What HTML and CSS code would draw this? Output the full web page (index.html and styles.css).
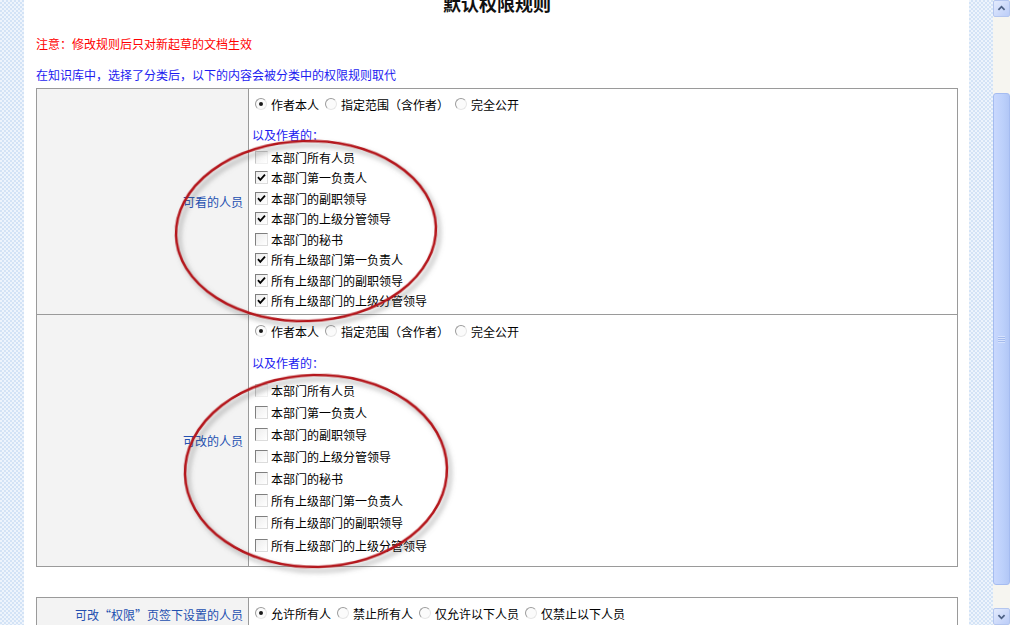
FILE: index.html
```html
<!DOCTYPE html>
<html lang="zh-CN">
<head>
<meta charset="utf-8">
<title>默认权限规则</title>
<link rel="stylesheet" href="styles.css">
</head>
<body>
<div class="page">
  <div class="strip"></div>
  <main class="main">
    <h1 class="title">默认权限规则</h1>
    <p class="notice">注意：修改规则后只对新起草的文档生效</p>
    <p class="info">在知识库中，选择了分类后，以下的内容会被分类中的权限规则取代</p>

    <div class="rules">
      <div class="row row-view">
        <div class="label">可看的人员</div>
        <div class="field">
          <div class="radios">
            <span class="opt"><i class="radio on"></i>作者本人</span>
            <span class="opt"><i class="radio"></i>指定范围（含作者）</span>
            <span class="opt"><i class="radio"></i>完全公开</span>
          </div>
          <div class="sub">以及作者的：</div>
          <ul class="checks">
            <li><i class="cb faint"></i>本部门所有人员</li>
            <li><i class="cb on"><svg viewBox="0 0 11 11"><path d="M2 5.2 L4.3 7.8 L9 2.6"/></svg></i>本部门第一负责人</li>
            <li><i class="cb on"><svg viewBox="0 0 11 11"><path d="M2 5.2 L4.3 7.8 L9 2.6"/></svg></i>本部门的副职领导</li>
            <li><i class="cb on"><svg viewBox="0 0 11 11"><path d="M2 5.2 L4.3 7.8 L9 2.6"/></svg></i>本部门的上级分管领导</li>
            <li><i class="cb"></i>本部门的秘书</li>
            <li><i class="cb on"><svg viewBox="0 0 11 11"><path d="M2 5.2 L4.3 7.8 L9 2.6"/></svg></i>所有上级部门第一负责人</li>
            <li><i class="cb on"><svg viewBox="0 0 11 11"><path d="M2 5.2 L4.3 7.8 L9 2.6"/></svg></i>所有上级部门的副职领导</li>
            <li><i class="cb on"><svg viewBox="0 0 11 11"><path d="M2 5.2 L4.3 7.8 L9 2.6"/></svg></i>所有上级部门的上级分管领导</li>
          </ul>
        </div>
      </div>
      <div class="row row-edit">
        <div class="label">可改的人员</div>
        <div class="field">
          <div class="radios">
            <span class="opt"><i class="radio on"></i>作者本人</span>
            <span class="opt"><i class="radio"></i>指定范围（含作者）</span>
            <span class="opt"><i class="radio"></i>完全公开</span>
          </div>
          <div class="sub">以及作者的：</div>
          <ul class="checks">
            <li><i class="cb faint"></i>本部门所有人员</li>
            <li><i class="cb"></i>本部门第一负责人</li>
            <li><i class="cb"></i>本部门的副职领导</li>
            <li><i class="cb"></i>本部门的上级分管领导</li>
            <li><i class="cb"></i>本部门的秘书</li>
            <li><i class="cb"></i>所有上级部门第一负责人</li>
            <li><i class="cb"></i>所有上级部门的副职领导</li>
            <li><i class="cb"></i>所有上级部门的上级分管领导</li>
          </ul>
        </div>
      </div>
    </div>

    <div class="rules rules-tab">
      <div class="row row-tab">
        <div class="label">可改“权限”页签下设置的人员</div>
        <div class="field">
          <div class="radios">
            <span class="opt"><i class="radio on"></i>允许所有人</span>
            <span class="opt"><i class="radio"></i>禁止所有人</span>
            <span class="opt"><i class="radio"></i>仅允许以下人员</span>
            <span class="opt"><i class="radio"></i>仅禁止以下人员</span>
          </div>
        </div>
      </div>
    </div>
  </main>
  <div class="strip"></div>
  <div class="scrollbar">
    <div class="sb-btn"><svg viewBox="0 0 17 17"><path d="M5 10 L8.5 6.5 L12 10"/></svg></div>
    <div class="sb-track">
      <div class="sb-thumb"><span class="grip"></span></div>
    </div>
    <div class="sb-btn"><svg viewBox="0 0 17 17"><path d="M5 7 L8.5 10.5 L12 7"/></svg></div>
  </div>
</div>

<svg class="marks" viewBox="0 0 1010 625" width="1010" height="625">
  <defs>
    <filter id="sh" x="-20%" y="-20%" width="140%" height="140%">
      <feDropShadow dx="3" dy="4" stdDeviation="2.5" flood-color="#606060" flood-opacity="0.55"/>
    </filter>
  </defs>
  <ellipse cx="306" cy="231" rx="130" ry="90" transform="rotate(-2 306 231)" filter="url(#sh)"/>
  <ellipse cx="316" cy="471" rx="131" ry="96" transform="rotate(-1.5 316 471)" filter="url(#sh)"/>
</svg>
</body>
</html>
```

FILE: styles.css
```css
html, body {
  margin: 0;
  padding: 0;
  width: 1010px;
  height: 625px;
  overflow: hidden;
  background: #fff;
}

body {
  font-family: "Noto Sans CJK SC", "Liberation Sans", sans-serif;
  font-size: 12px;
  color: #000;
  position: relative;
}

.page {
  display: flex;
  height: 625px;
}

.strip {
  width: 24px;
  flex: none;
  background-color: #e9f1fb;
  background-image: repeating-conic-gradient(#d3e3f6 0 25%, #eef4fc 0 50%);
  background-size: 4px 4px;
}

.main {
  width: 945px;
  flex: none;
  box-sizing: border-box;
  padding: 0 11px 0 12px;
  background: #fff;
}

.title {
  margin: -7px 0 0;
  height: 20px;
  line-height: 20px;
  font-size: 18px;
  font-weight: bold;
  text-align: center;
  color: #111;
}

.notice {
  margin: 23px 0 0;
  line-height: 16px;
  color: #ff0000;
}

.info {
  margin: 15px 0 0;
  line-height: 16px;
  color: #1c1cf0;
}

.rules {
  margin-top: 5px;
  width: 922px;
  box-sizing: border-box;
  border: 1px solid #9a9a9a;
}

.rules-tab {
  margin-top: 30px;
}

.row {
  display: grid;
  grid-template-columns: 211px 1fr;
}

.row-view {
  height: 225px;
}

.row-edit {
  height: 251px;
  border-top: 1px solid #9a9a9a;
}

.row-tab {
  height: 32px;
}

.label {
  background: #f3f3f3;
  border-right: 1px solid #9a9a9a;
  display: flex;
  align-items: center;
  justify-content: flex-end;
  padding-right: 5px;
  color: #2350b0;
  margin-right: -1px;
}

.field {
  padding-left: 4px;
  display: flex;
  flex-direction: column;
}

.radios {
  display: flex;
  align-items: center;
  height: 20px;
  margin-top: 5px;
}

.row-edit .radios { margin-top: 6px; }

.opt {
  display: flex;
  align-items: center;
  white-space: nowrap;
}

.opt + .opt {
  margin-left: 3px;
}

.radio {
  display: inline-block;
  box-sizing: border-box;
  width: 12px;
  height: 12px;
  margin: 0 4px 0 3px;
  border-radius: 50%;
  border: 1px solid;
  border-color: #9c9c9c #e6e6e6 #e6e6e6 #9c9c9c;
  background: #fbfbfb;
  position: relative;
}

.radio.on::after {
  content: "";
  position: absolute;
  left: 3px;
  top: 3px;
  width: 4px;
  height: 4px;
  border-radius: 50%;
  background: #1a1a1a;
}

.sub {
  margin-top: 11px;
  line-height: 20px;
  height: 20px;
  color: #1c1cf0;
}

.row-edit .sub { margin-top: 12px; }

.checks {
  list-style: none;
  margin: 2px 0 0;
  padding: 0;
}

.row-edit .checks { margin-top: 6px; }

.checks li {
  display: flex;
  align-items: center;
  height: 20.5px;
  white-space: nowrap;
}

.row-edit .checks li {
  height: 22.15px;
}

.cb {
  display: inline-block;
  box-sizing: border-box;
  width: 13px;
  height: 13px;
  margin: 0 3px 0 3px;
  border: 1px solid;
  border-color: #7f7f7f #dcdcdc #dcdcdc #7f7f7f;
  background: linear-gradient(135deg, #ececec, #ffffff);
  position: relative;
}

.cb.faint {
  border-color: #c4c4c4 #f0f0f0 #f0f0f0 #c4c4c4;
}

.cb svg {
  position: absolute;
  left: 0;
  top: 0;
  width: 11px;
  height: 11px;
}

.cb svg path {
  fill: none;
  stroke: #000;
  stroke-width: 1.8;
}

.row-tab .radios {
  margin-top: 5px;
}

.scrollbar {
  width: 17px;
  flex: none;
  display: flex;
  flex-direction: column;
  background: #f6f5f0;
}

.sb-btn {
  height: 17px;
  flex: none;
  box-sizing: border-box;
  border: 1px solid #b4c6ef;
  border-radius: 2px;
  background: linear-gradient(135deg, #e3ebfd, #bccdf8);
}

.sb-btn:last-child {
  margin-top: 1px;
}

.sb-btn svg {
  display: block;
  width: 15px;
  height: 15px;
}

.sb-btn svg path {
  fill: none;
  stroke: #4d6185;
  stroke-width: 2;
}

.sb-track {
  flex: 1;
  display: flex;
  flex-direction: column;
}

.sb-thumb {
  margin-top: 76px;
  height: 492px;
  box-sizing: border-box;
  border: 1px solid #a5bcf1;
  border-radius: 3px;
  background: linear-gradient(90deg, #c9d8fd, #bcd0fb 60%, #b2c7f6);
  display: flex;
  align-items: center;
  justify-content: center;
}

.grip {
  width: 7px;
  height: 7px;
  background: repeating-linear-gradient(180deg, #eef3ff 0 1px, #8ca6e0 1px 2px);
  opacity: 0.5;
}

.marks {
  position: absolute;
  left: 0;
  top: 0;
  pointer-events: none;
}

.marks ellipse {
  fill: none;
  stroke: #b4151a;
  stroke-width: 2.6;
}
```
